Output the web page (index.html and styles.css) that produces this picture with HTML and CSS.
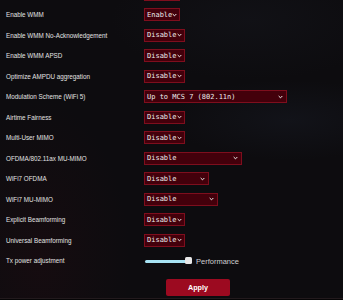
FILE: index.html
```html
<!DOCTYPE html>
<html>
<head>
<meta charset="utf-8">
<link rel="stylesheet" href="styles.css">
</head>
<body>
<div class="page">
  <div class="rows">
    <div class="row"><span class="label"></span><div class="select w-enable"></div></div>
    <div class="row"><span class="label">Enable WMM</span><div class="select w-enable"><span>Enable</span><svg class="chev" viewBox="0 0 6 4"><path d="M0.8 0.8 L3 3 L5.2 0.8"/></svg></div></div>
    <div class="row"><span class="label">Enable WMM No-Acknowledgement</span><div class="select w-disable"><span>Disable</span><svg class="chev" viewBox="0 0 6 4"><path d="M0.8 0.8 L3 3 L5.2 0.8"/></svg></div></div>
    <div class="row"><span class="label">Enable WMM APSD</span><div class="select w-disable"><span>Disable</span><svg class="chev" viewBox="0 0 6 4"><path d="M0.8 0.8 L3 3 L5.2 0.8"/></svg></div></div>
    <div class="row"><span class="label">Optimize AMPDU aggregation</span><div class="select w-disable"><span>Disable</span><svg class="chev" viewBox="0 0 6 4"><path d="M0.8 0.8 L3 3 L5.2 0.8"/></svg></div></div>
    <div class="row"><span class="label">Modulation Scheme (WiFi 5)</span><div class="select w-mod"><span>Up to MCS 7 (802.11n)</span><svg class="chev" viewBox="0 0 6 4"><path d="M0.8 0.8 L3 3 L5.2 0.8"/></svg></div></div>
    <div class="row"><span class="label">Airtime Fairness</span><div class="select w-disable"><span>Disable</span><svg class="chev" viewBox="0 0 6 4"><path d="M0.8 0.8 L3 3 L5.2 0.8"/></svg></div></div>
    <div class="row"><span class="label">Multi-User MIMO</span><div class="select w-disable"><span>Disable</span><svg class="chev" viewBox="0 0 6 4"><path d="M0.8 0.8 L3 3 L5.2 0.8"/></svg></div></div>
    <div class="row"><span class="label">OFDMA/802.11ax MU-MIMO</span><div class="select w-ofdma"><span>Disable</span><svg class="chev" viewBox="0 0 6 4"><path d="M0.8 0.8 L3 3 L5.2 0.8"/></svg></div></div>
    <div class="row"><span class="label">WiFi7 OFDMA</span><div class="select w-w7o"><span>Disable</span><svg class="chev" viewBox="0 0 6 4"><path d="M0.8 0.8 L3 3 L5.2 0.8"/></svg></div></div>
    <div class="row"><span class="label">WiFi7 MU-MIMO</span><div class="select w-w7m"><span>Disable</span><svg class="chev" viewBox="0 0 6 4"><path d="M0.8 0.8 L3 3 L5.2 0.8"/></svg></div></div>
    <div class="row"><span class="label">Explicit Beamforming</span><div class="select w-disable"><span>Disable</span><svg class="chev" viewBox="0 0 6 4"><path d="M0.8 0.8 L3 3 L5.2 0.8"/></svg></div></div>
    <div class="row"><span class="label">Universal Beamforming</span><div class="select w-disable"><span>Disable</span><svg class="chev" viewBox="0 0 6 4"><path d="M0.8 0.8 L3 3 L5.2 0.8"/></svg></div></div>
    <div class="row"><span class="label">Tx power adjustment</span>
      <div class="power">
        <div class="slider"><div class="track"></div><div class="thumb"></div></div>
        <span class="perf">Performance</span>
      </div>
    </div>
  </div>
  <div class="actions"><button class="apply">Apply</button></div>
  <div class="footer"></div>
</div>
</body>
</html>
```

FILE: styles.css
```css
html, body {
  margin: 0;
  padding: 0;
}
body {
  width: 343px;
  height: 300px;
  overflow: hidden;
  background-color: #0d0c0f;
  background-image:
    radial-gradient(ellipse 120px 40px at 290px 120px, rgba(40, 50, 70, 0.18), transparent),
    radial-gradient(ellipse 90px 160px at 40px 260px, rgba(60, 10, 20, 0.18), transparent),
    radial-gradient(ellipse 140px 60px at 250px 20px, rgba(40, 45, 60, 0.15), transparent);
  font-family: "Liberation Sans", Arial, sans-serif;
  color: #dcdcdc;
}
.page {
  margin-top: -16.25px;
}
.rows {
  display: flex;
  flex-direction: column;
}
.row {
  display: grid;
  grid-template-columns: 138px auto;
  align-items: center;
  height: 20.5px;
  padding-left: 6px;
}
.label {
  font-size: 6.3px;
  color: #e2e2e2;
  white-space: nowrap;
}
.select {
  box-sizing: border-box;
  height: 13px;
  display: flex;
  align-items: center;
  justify-content: space-between;
  padding: 0 3px 0 2px;
  background: #43000b;
  border: 1px solid #7e0e1d;
  font-family: "DejaVu Sans Mono", monospace;
  font-size: 7px;
  color: #ececec;
  white-space: nowrap;
}
.chev {
  width: 5px;
  height: 4px;
  flex: none;
}
.chev path {
  fill: none;
  stroke: #f0f0f0;
  stroke-width: 1.2;
}
.w-enable { width: 36px; }
.w-disable { width: 41px; }
.w-mod { width: 143px; }
.w-ofdma { width: 98px; }
.w-w7o { width: 65px; }
.w-w7m { width: 74px; }
.power {
  display: flex;
  align-items: center;
  gap: 3px;
}
.slider {
  position: relative;
  width: 48px;
  height: 8px;
  margin-left: 1px;
}
.track {
  position: absolute;
  left: 0;
  top: 3.5px;
  width: 44px;
  height: 3px;
  border-radius: 2px;
  background: #a8e4f4;
}
.thumb {
  position: absolute;
  left: 40px;
  top: 0;
  width: 7px;
  height: 7px;
  border-radius: 1.5px;
  background: #e8e8e8;
}
.perf {
  font-size: 7.5px;
  color: #cfcfcf;
  margin-top: 2px;
}
.actions {
  padding-left: 166px;
  margin-top: 5.25px;
}
.apply {
  width: 64px;
  height: 17px;
  border: none;
  border-radius: 2px;
  background: #9c0a20;
  color: #ffffff;
  font-family: "Liberation Sans", Arial, sans-serif;
  font-weight: bold;
  font-size: 7.2px;
  padding: 0;
}
.footer {
  margin-top: 1.5px;
  height: 10px;
  background: #060506;
  border-top: 1px solid #221a1d;
}
```
